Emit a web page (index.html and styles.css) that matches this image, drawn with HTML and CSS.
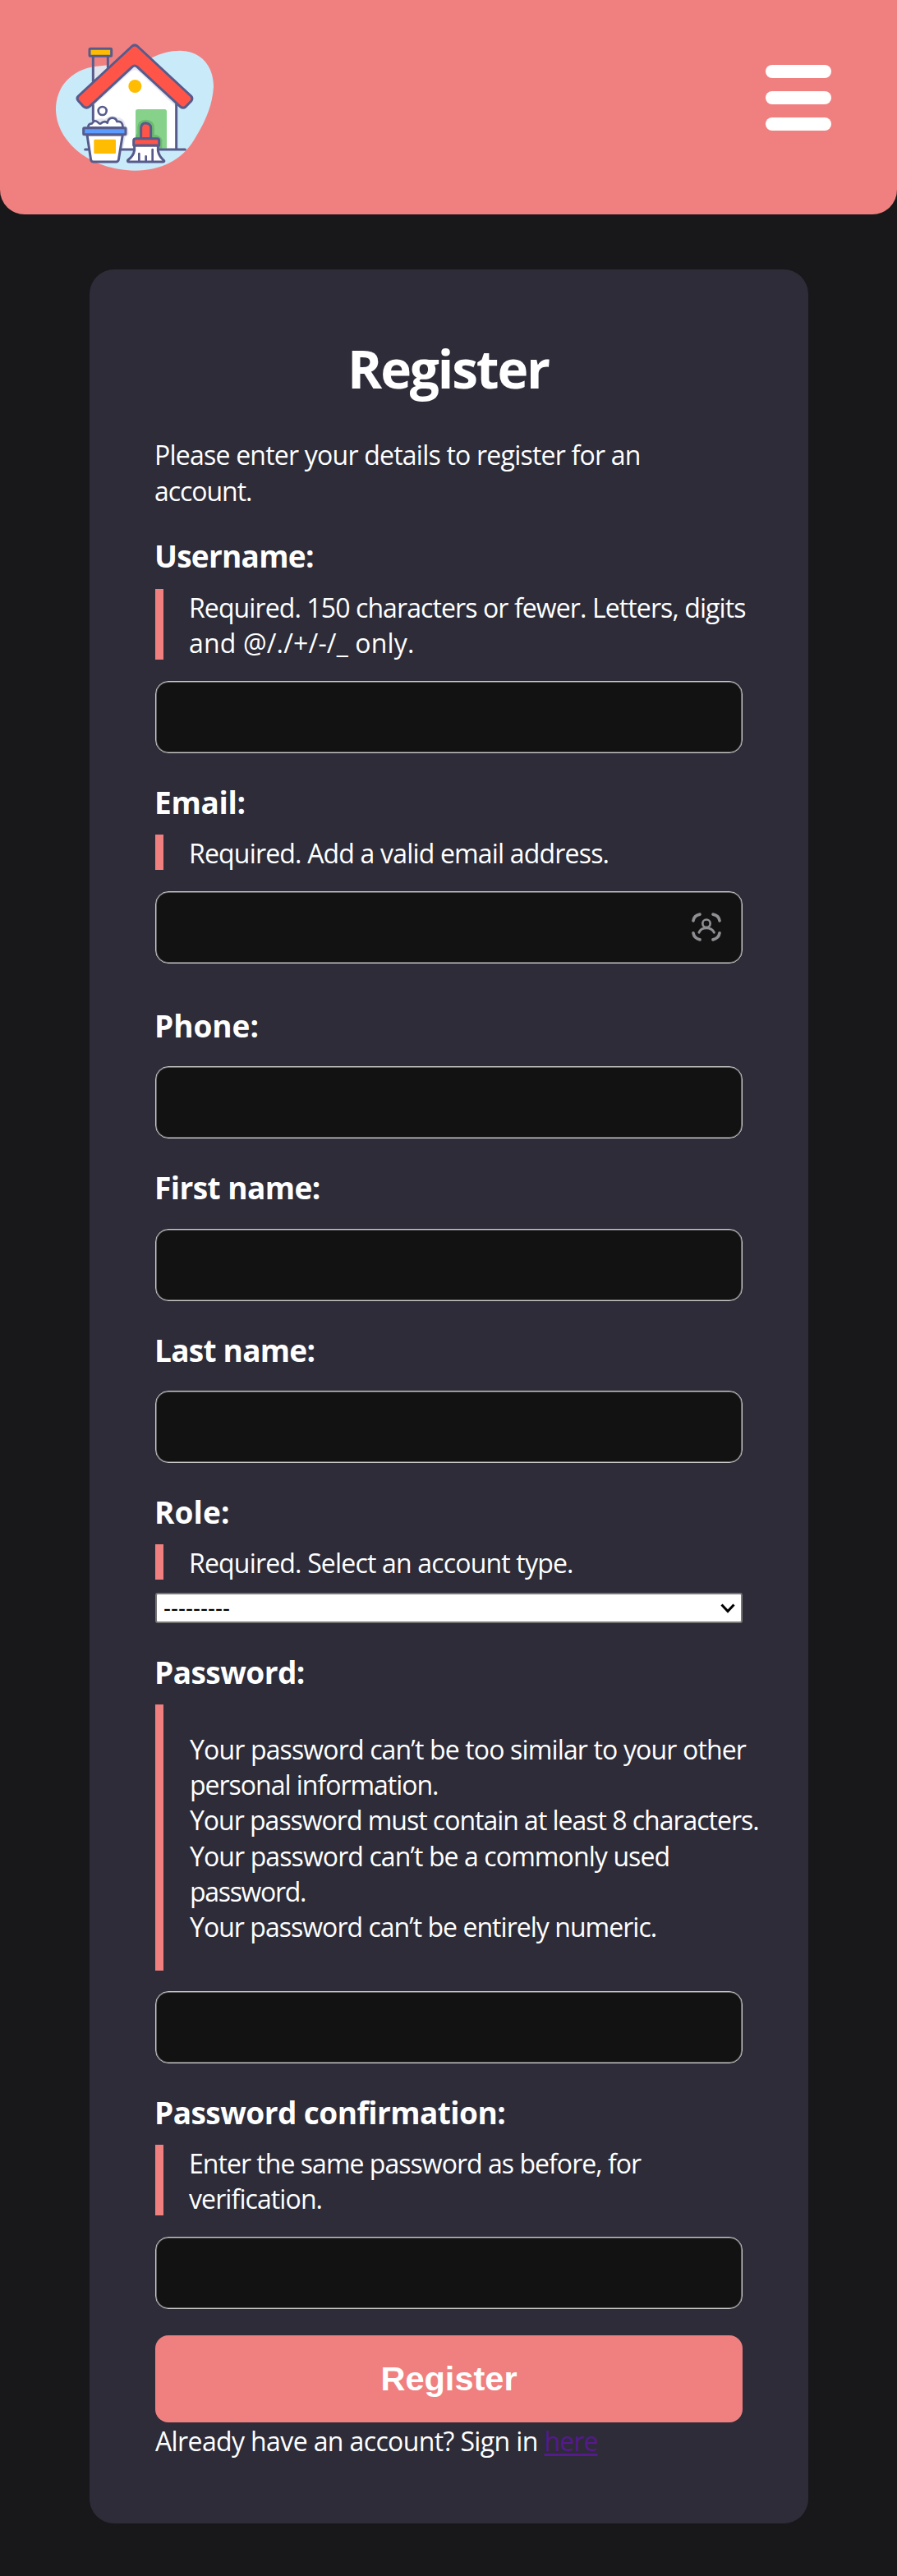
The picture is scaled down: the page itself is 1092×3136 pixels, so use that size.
FILE: index.html
```html
<!DOCTYPE html>
<html lang="en">
<head>
<meta charset="utf-8">
<title>Register</title>
<link rel="stylesheet" href="styles.css">
</head>
<body>
<header class="header">
  <svg class="logo" viewBox="0 0 690 600" aria-label="Home">
    <path fill="#c9eaf9" d="M54 312C54 225 110 165 200 152C290 146 350 142 400 122C440 104 470 95 508 95C585 97 630 150 630 228C624 310 590 370 558 422C515 492 440 533 342 533C180 530 58 430 54 312Z"/>
    <path fill="#f08080" d="M190 110H244V158L190 210Z"/>
    <path fill="#e1e4ed" d="M190 154L244 148V158L190 208Z"/>
    <path fill="#fff" d="M190 285L342 148L495 290V456H190Z"/>
    <path fill="#e7e7f1" d="M190 285L342 148L495 285V302L357 172Q342 160 328 172L194 294Z"/>
    <path fill="#e7e7f1" d="M194 346Q222 340 234 344Q258 325 278 338Q302 338 309 368Q320 375 320 402L307 412L300 452H194Z"/>
    <path fill="#86d28a" d="M345 452V317Q345 309 353 309H451Q459 309 459 317V452Z"/>
    <path fill="#6cba70" d="M345 405Q350 402 352 396V376Q352 348 382 347Q414 348 414 378V402Q434 403 442 420V452H345Z"/>
    <g stroke="#565b8c" stroke-width="9" stroke-linecap="round" stroke-linejoin="round" fill="none">
      <path d="M190 116V206M244 116V156M190 294V348M494 290V456M161 456H177M294 456H338M433 456H526"/>
      <rect x="177" y="88" width="80" height="27" rx="3" fill="#ffbc00"/>
      <path fill="#ff5549" d="M333 78Q342 71 351 78L548 261Q555 269 549 278L528 300Q517 308 507 298L351 154Q342 146 333 154L177 299Q166 308 155 299L136 278Q128 269 136 261Z"/>
      <circle cx="224" cy="315" r="15" fill="#fff" stroke-width="8"/>
      <path fill="#fff" stroke-width="8" d="M172 376Q171 362 186 361Q194 345 208 357Q215 367 225 356Q237 352 242 359Q246 340 261 341Q275 342 277 354Q298 350 299 376Z"/>
      <path fill="#fff" d="M168 402L182 494Q184 501 191 501H274Q281 501 283 494L298 402Z"/>
      <rect x="155" y="377" width="154" height="24" rx="3" fill="#5c9cff"/>
      <path fill="#ff5549" d="M365 416V375Q367 360 382 359Q400 361 401 376V416Z"/>
      <path fill="#fff" d="M341 441V458Q338 479 317 495Q314 501 321 501H446Q453 500 447 495Q430 480 427 460V441Z"/>
      <path fill="#ff5549" d="M338 441V424Q338 416 346 416H424Q431 416 431 424V441Z"/>
      <path d="M358 471V499M383 481V499M407 456V499" stroke-width="8"/>
    </g>
    <rect x="193" y="419" width="80" height="52" rx="4" fill="#ffbc00"/>
    <circle cx="343" cy="225" r="24" fill="#ffbc00"/>
  </svg>
  <div class="menu"><span class="menu-bar"></span><span class="menu-bar"></span><span class="menu-bar"></span></div>
</header>
<main class="card">
  <h1 class="title">Register</h1>
  <p class="intro"><span class="line intro-first">Please enter your details to register for an</span><span class="line word">account.</span></p>
  <form class="form">
    <div class="field">
      <label class="label long" for="username">Username:</label>
      <p class="help help-double"><span class="line">Required. 150 characters or fewer. Letters, digits</span><span class="line symbols">and @/./+/-/_ only.</span></p>
      <input class="input" id="username" type="text">
    </div>
    <div class="field email">
      <label class="label brief" for="email">Email:</label>
      <p class="help"><span class="line required">Required. Add a valid email address.</span></p>
      <div class="input-wrap">
        <input class="input" id="email" type="email">
        <svg class="contact-icon" viewBox="0 0 108 104"><g fill="none" stroke="#8e8e93" stroke-linecap="round"><path stroke-width="11" d="M6 29Q9 10 30 6M78 6Q99 10 102 29M102 74Q99 94 78 98M30 98Q9 94 6 74"/><circle cx="54" cy="39" r="14" stroke-width="8"/><path stroke-width="9" d="M27 72Q34 56 54 56Q74 56 82 72"/></g></svg>
      </div>
    </div>
    <div class="field phone">
      <label class="label" for="phone">Phone:</label>
      <input class="input" id="phone" type="text">
    </div>
    <div class="field first-name">
      <label class="label mid" for="first">First name:</label>
      <input class="input" id="first" type="text">
    </div>
    <div class="field last-name">
      <label class="label long" for="last">Last name:</label>
      <input class="input" id="last" type="text">
    </div>
    <div class="field role">
      <label class="label wide">Role:</label>
      <p class="help"><span class="line required">Required. Select an account type.</span></p>
      <div class="select"><span class="select-text">---------</span><svg class="chevron" viewBox="0 0 18 12"><path d="M1.5 1.5L9 9.5L16.5 1.5" fill="none" stroke="#000" stroke-width="3"/></svg></div>
    </div>
    <div class="field password">
      <label class="label mid" for="password">Password:</label>
      <div class="help help-list"><span class="line similar">Your password can’t be too similar to your other</span><span class="line tight">personal information.</span><span class="line tight">Your password must contain at least 8 characters.</span><span class="line">Your password can’t be a commonly used</span><span class="line tightest">password.</span><span class="line numeric">Your password can’t be entirely numeric.</span></div>
      <input class="input" id="password" type="password">
    </div>
    <div class="field confirm">
      <label class="label mid" for="confirm">Password confirmation:</label>
      <p class="help help-double"><span class="line numeric">Enter the same password as before, for</span><span class="line">verification.</span></p>
      <input class="input" id="confirm" type="password">
    </div>
    <button class="submit" type="button">Register</button>
  </form>
  <p class="signin">Already have an account? Sign in <a class="link" href="#">here</a></p>
</main>
</body>
</html>
```
FILE: styles.css
```css
* { box-sizing: border-box; }

body {
  margin: 0;
  min-height: 3136px;
  background: #18181a;
  color: #fff;
  font: 32px/43px "Open Sans", "Noto Sans", sans-serif;
  letter-spacing: -0.9px;
}

p { margin: 0; }

.header {
  display: flex;
  justify-content: space-between;
  align-items: flex-start;
  height: 261px;
  padding: 30px 80px 0 50px;
  background: #f08080;
  border-radius: 0 0 30px 30px;
}

.logo { width: 230px; height: 200px; }

.menu {
  display: flex;
  flex-direction: column;
  gap: 16px;
  width: 80px;
  padding-top: 49px;
}

.menu-bar { height: 16px; border-radius: 8px; background: #fff; }

.card {
  width: 875px;
  height: 2744px;
  margin: 67px 0 0 109px;
  padding: 78px 80px 0;
  background: #2d2c38;
  border-radius: 30px;
}

.title {
  margin: 0 2px 40px 0;
  font-size: 64px;
  line-height: 86px;
  letter-spacing: -2.17px;
  text-align: center;
}

.line { display: block; white-space: nowrap; }

.intro { height: 87px; margin-left: -1px; line-height: 43.5px; }
.intro-first { letter-spacing: -0.78px; }
.word { letter-spacing: -1.05px; }

.field { display: flex; flex-direction: column; margin-top: 34px; }
.field:first-child { margin-top: 32px; }

.label {
  height: 50px;
  margin: 0 0 16px -1px;
  font-size: 37px;
  font-weight: 700;
  line-height: 51px;
  letter-spacing: -0.05px;
}

.long { letter-spacing: -0.75px; }
.mid { letter-spacing: -0.55px; }
.brief { letter-spacing: -0.3px; }
.wide { letter-spacing: 0.1px; }

.help {
  height: 43px;
  margin-bottom: 26px;
  padding: 1px 0 0 31px;
  border-left: 10px solid #f08080;
}

.help-double { height: 86px; }
.help-list { height: 324px; padding: 33px 0 0 32px; line-height: 43.2px; margin-bottom: 25px; }
.required { letter-spacing: -0.82px; }
.similar { letter-spacing: -0.85px; }
.tight { letter-spacing: -1.02px; }
.tightest { letter-spacing: -1.32px; }
.numeric { letter-spacing: -0.97px; }
.symbols { letter-spacing: 0.15px; }

.input {
  display: block;
  width: 100%;
  height: 88px;
  padding: 0 20px;
  background: #121212;
  border: 1px solid #ccc;
  border-radius: 16px;
  box-shadow: inset 0 0 0 1px #666;
  color: #fff;
  font: inherit;
}

.input-wrap { position: relative; }
.contact-icon { position: absolute; right: 26px; top: 26px; width: 36px; height: 35px; }

.phone { margin-top: 50px; }
.phone .label { margin-bottom: 25px; }
.first-name .label { margin-bottom: 26px; }
.last-name .label { margin-bottom: 25px; }
.role .help { margin-bottom: 16px; }
.email .label, .role .label, .password .label, .confirm .label { margin-bottom: 15px; }

.select {
  display: flex;
  align-items: center;
  justify-content: space-between;
  height: 37px;
  padding: 0 7px 0 8px;
  background: #fff;
  border: 2px solid #767676;
  border-radius: 3px;
  color: #000;
}

.select-text { font: 27px/30px "Liberation Sans", Arial, sans-serif; letter-spacing: 0; }
.chevron { width: 18px; height: 12px; }

.submit {
  display: block;
  width: 100%;
  height: 106px;
  margin-top: 32px;
  padding: 0;
  background: #f08080;
  border: 0;
  border-radius: 16px;
  color: #fff;
  font: 700 41.5px/106px "Liberation Sans", Arial, sans-serif;
}

.signin { margin-top: 1px; letter-spacing: -0.62px; }
.link { color: #551a8b; letter-spacing: -0.89px; text-decoration-thickness: 3px; text-underline-offset: 3px; }
```
